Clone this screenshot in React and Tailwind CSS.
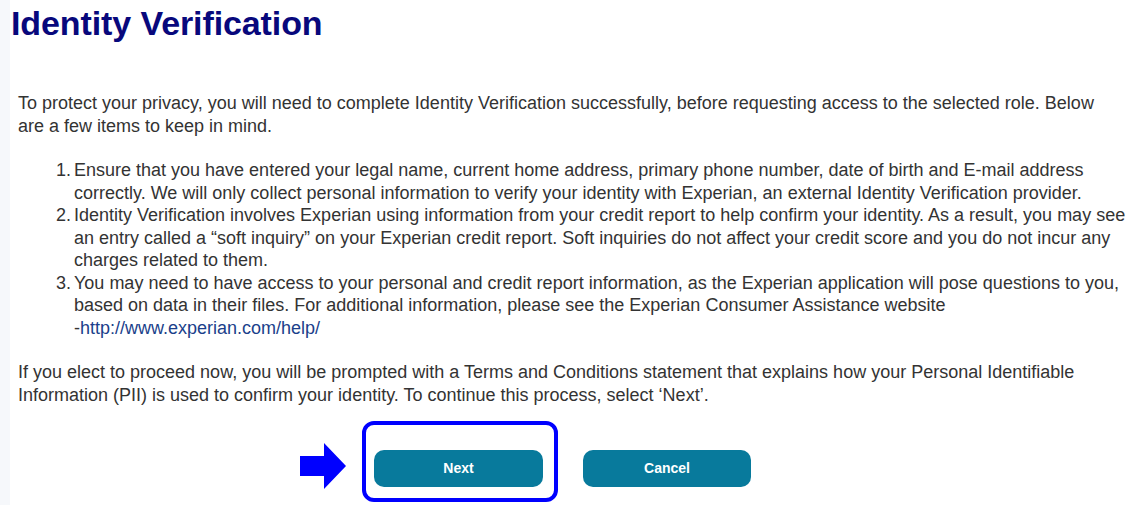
import React from "react";

const items = [
  <>
    Ensure that you have entered your legal name, current home address, primary phone number, date of birth and E-mail address
    <br />
    correctly. We will only collect personal information to verify your identity with Experian, an external Identity Verification provider.
  </>,
  <>
    Identity Verification involves Experian using information from your credit report to help confirm your identity. As a result, you may see
    <br />
    an entry called a “soft inquiry” on your Experian credit report. Soft inquiries do not affect your credit score and you do not incur any
    <br />
    charges related to them.
  </>,
  <>
    You may need to have access to your personal and credit report information, as the Experian application will pose questions to you,
    <br />
    based on data in their files. For additional information, please see the Experian Consumer Assistance website
    <br />
    -<span className="text-[#1b3f8b]">http://www.experian.com/help/</span>
  </>,
];

const App = () => {
  return (
    <div className="flex h-[505px] w-[1132px] overflow-hidden bg-white font-['Liberation_Sans',Arial,sans-serif]">
      <div className="w-[10px] shrink-0 bg-[#f6f8fb]"></div>
      <div className="flex w-[1120px] flex-col">
        <h1 className="pl-[1px] pt-[4px] text-[34px] font-bold leading-[38px] tracking-[-0.1px] text-[#08087c]">
          Identity Verification
        </h1>

        <div className="mt-[50px] whitespace-nowrap pl-[8px] text-[18px] leading-[22.5px] text-[#333333]">
          <p>
            To protect your privacy, you will need to complete Identity Verification successfully, before requesting access to the selected role. Below
            <br />
            are a few items to keep in mind.
          </p>

          <ol className="mt-[22px] pl-[38px]">
            {items.map((item, i) => (
              <li key={i} className="flex">
                <span className="w-[18px] shrink-0">{i + 1}.</span>
                <span>{item}</span>
              </li>
            ))}
          </ol>

          <p className="mt-[22px]">
            If you elect to proceed now, you will be prompted with a Terms and Conditions statement that explains how your Personal Identifiable
            <br />
            Information (PII) is used to confirm your identity. To continue this process, select ‘Next’.
          </p>
        </div>

        <div className="mt-[15px] flex items-end pl-[290px]">
          <svg width="46" height="46" viewBox="0 0 46 46" className="mb-[13px]">
            <polygon points="0,13 24,13 24,0 46,23 24,46 24,33 0,33" fill="#0000ff" />
          </svg>
          <div className="ml-[16px] rounded-[12px] border-4 border-[#0000ff] pb-[11px] pl-[8px] pr-[11px] pt-[25px]">
            <button className="h-[37px] w-[169px] rounded-[10px] bg-[#087a9c] text-[14px] font-bold text-white">
              Next
            </button>
          </div>
          <button className="mb-[15px] ml-[25px] h-[37px] w-[168px] rounded-[10px] bg-[#087a9c] text-[14px] font-bold text-white">
            Cancel
          </button>
        </div>
      </div>
    </div>
  );
};

export default App;
